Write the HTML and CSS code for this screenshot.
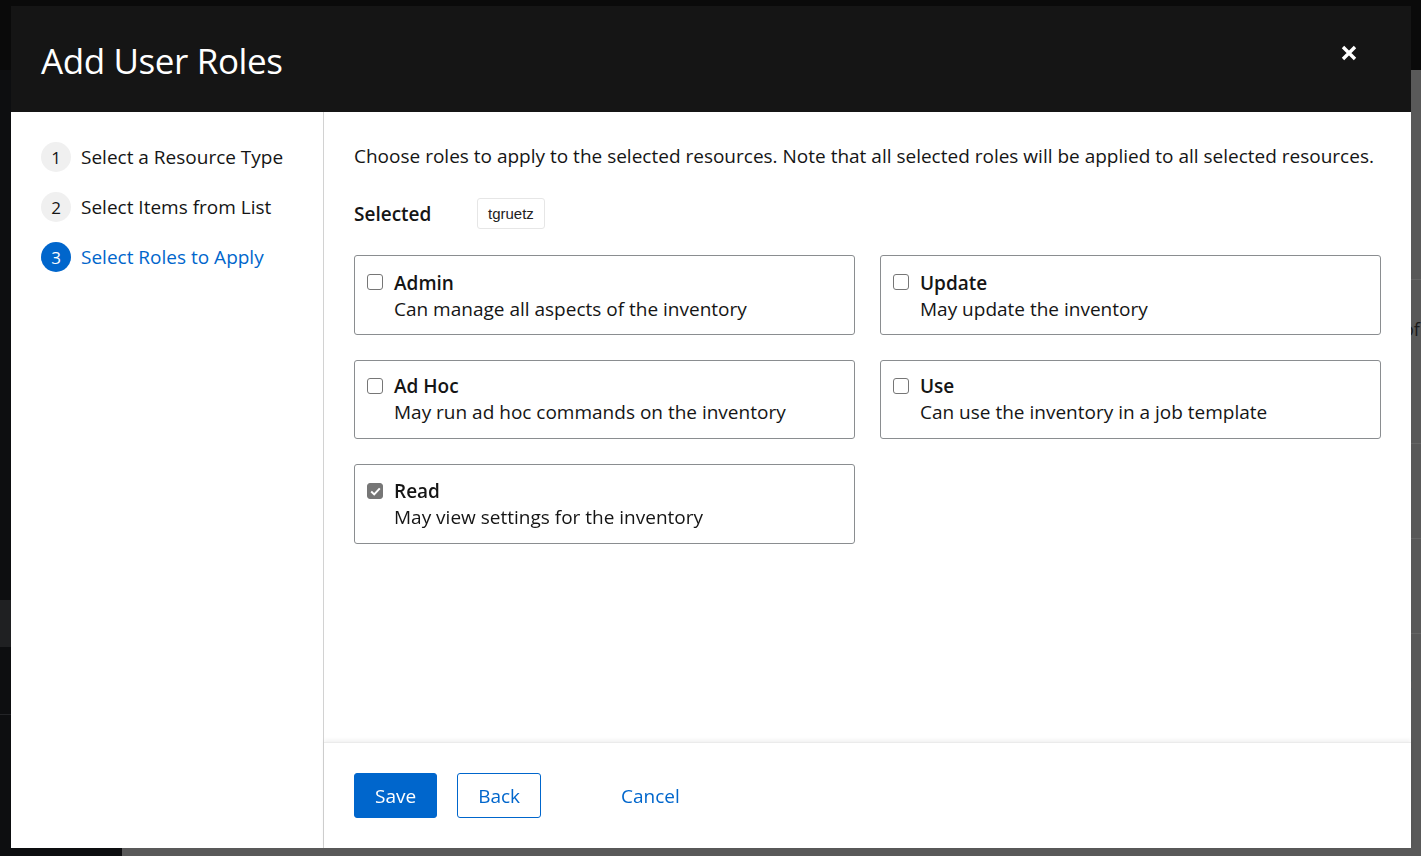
FILE: index.html
```html
<!DOCTYPE html>
<html lang="en">
<head>
<meta charset="utf-8">
<title>Add User Roles</title>
<link rel="stylesheet" href="styles.css">
</head>
<body>
<div class="app">
  <div class="masthead"></div>
  <div class="sidebar">
    <div class="side-item active"></div>
    <div class="side-item"></div>
  </div>
  <div class="page">
    <div class="row"><span class="row-text">of</span></div>
    <div class="row short"></div>
    <div class="row short"></div>
    <div class="row"><span class="row-text">c</span></div>
  </div>
</div>

<div class="modal" role="dialog" aria-label="Add User Roles">
  <header class="modal-header">
    <h1 class="modal-title">Add User Roles</h1>
    <button class="close" aria-label="Close">
      <svg width="18" height="18" viewBox="0 0 18 18"><path d="M3 3 L15 15 M15 3 L3 15" stroke="#fff" stroke-width="3.4" stroke-linecap="butt"/></svg>
    </button>
  </header>
  <div class="modal-body">
    <nav class="steps">
      <div class="step"><span class="num">1</span><span class="step-label">Select a Resource Type</span></div>
      <div class="step"><span class="num">2</span><span class="step-label">Select Items from List</span></div>
      <div class="step current"><span class="num">3</span><span class="step-label">Select Roles to Apply</span></div>
    </nav>
    <div class="main">
      <div class="content">
        <p class="intro">Choose roles to apply to the selected resources. Note that all selected roles will be applied to all selected resources.</p>
        <div class="selected">
          <span class="selected-label">Selected</span>
          <span class="chip">tgruetz</span>
        </div>
        <div class="roles">
          <label class="role">
            <span class="check"></span>
            <span class="role-text"><span class="role-name">Admin</span><span class="role-desc">Can manage all aspects of the inventory</span></span>
          </label>
          <label class="role">
            <span class="check"></span>
            <span class="role-text"><span class="role-name">Update</span><span class="role-desc">May update the inventory</span></span>
          </label>
          <label class="role">
            <span class="check"></span>
            <span class="role-text"><span class="role-name">Ad Hoc</span><span class="role-desc">May run ad hoc commands on the inventory</span></span>
          </label>
          <label class="role">
            <span class="check"></span>
            <span class="role-text"><span class="role-name">Use</span><span class="role-desc">Can use the inventory in a job template</span></span>
          </label>
          <label class="role">
            <span class="check checked"><svg width="11" height="9" viewBox="0 0 11 9"><path d="M1.2 4.6 L4.2 7.4 L9.8 1.4" fill="none" stroke="#fff" stroke-width="2"/></svg></span>
            <span class="role-text"><span class="role-name">Read</span><span class="role-desc">May view settings for the inventory</span></span>
          </label>
        </div>
      </div>
      <footer class="footer">
        <button class="btn primary">Save</button>
        <button class="btn secondary">Back</button>
        <button class="btn link">Cancel</button>
      </footer>
    </div>
  </div>
</div>
</body>
</html>
```

FILE: styles.css
```css
* { box-sizing: border-box; }
html, body { margin: 0; padding: 0; }
body {
  width: 1421px;
  height: 856px;
  overflow: hidden;
  font-family: "Open Sans", "Noto Sans", sans-serif;
  color: #151515;
  background: #0c0d0f;
}

/* backdrop app */
.app {
  display: grid;
  grid-template-columns: 122px 1fr;
  grid-template-rows: 70px 786px;
  height: 856px;
  overflow: hidden;
}
.masthead { grid-column: 1 / 3; background: #0a0a0a; }
.sidebar { background: #0d0e10; padding-top: 530px; overflow: hidden; }
.side-item { height: 47px; }
.side-item.active { background: #1f2022; }
.side-item + .side-item { height: 68px; border-bottom: 1px solid #232427; }
.page {
  background: #595959;
  padding-top: 209px;
  overflow: hidden;
  min-width: 0;
}
.row {
  height: 164px;
  border-top: 1px solid #666;
  padding: 37px 0 0 1281px;
  color: #1a1a1a;
  font-size: 18px;
  line-height: 24px;
  white-space: nowrap;
}
.row.short { height: 95px; }
.row-text { display: block; }

/* modal */
.modal {
  position: fixed;
  left: 11px;
  top: 6px;
  width: 1400px;
  height: 842px;
  background: #fff;
  display: flex;
  flex-direction: column;
}
.modal-header {
  position: relative;
  flex: none;
  height: 106px;
  background: #151515;
  padding: 0 30px;
  display: flex;
  align-items: center;
}
.modal-title {
  margin: 2px 0 0;
  color: #fff;
  font-weight: 500;
  font-size: 35px;
  letter-spacing: -0.4px;
}
.close {
  position: absolute;
  right: 53px;
  top: 38px;
  width: 18px;
  height: 18px;
  padding: 0;
  border: 0;
  background: none;
  display: flex;
}

.modal-body {
  flex: 1;
  display: flex;
  min-height: 0;
}
.steps {
  flex: none;
  width: 313px;
  border-right: 1px solid #d2d2d2;
  padding: 30px 0 0 30px;
  display: flex;
  flex-direction: column;
  gap: 20px;
}
.step {
  display: flex;
  align-items: center;
  gap: 10px;
  font-size: 19px;
  height: 30px;
  white-space: nowrap;
}
.num {
  flex: none;
  width: 30px;
  height: 30px;
  border-radius: 50%;
  background: #f0f0f0;
  display: flex;
  align-items: center;
  justify-content: center;
  font-size: 17px;
}
.step.current .num { background: #0066cc; color: #fff; }
.step.current .step-label { color: #0066cc; }

.main {
  flex: 1;
  display: flex;
  flex-direction: column;
  min-width: 0;
}
.content {
  flex: 1;
  padding: 31px 30px 0 30px;
}
.intro {
  margin: 0;
  font-size: 19px;
  line-height: 27px;
  white-space: nowrap;
}
.selected {
  display: flex;
  align-items: center;
  margin-top: 28px;
  height: 31px;
}
.selected-label {
  width: 123px;
  font-weight: 600;
  font-size: 19px;
}
.chip {
  height: 31px;
  padding: 0 10px;
  border: 1px solid #e6e6e6;
  border-radius: 3px;
  display: flex;
  align-items: center;
  font-family: "Liberation Sans", Arial, sans-serif;
  font-size: 15px;
  color: #222;
}
.roles {
  margin-top: 26px;
  display: grid;
  grid-template-columns: 501px 501px;
  column-gap: 25px;
  row-gap: 25px;
}
.role {
  height: 80px;
  border: 1px solid #8a8d90;
  border-radius: 3px;
  padding: 13px 12px 0 12px;
  display: flex;
  align-items: flex-start;
  gap: 11px;
}
.role:nth-child(1), .role:nth-child(2) { padding-top: 14px; }
.role:nth-child(3), .role:nth-child(4) { height: 79px; padding-top: 12px; }
.check {
  flex: none;
  margin-top: 5px;
  width: 16px;
  height: 16px;
  border: 1px solid #767676;
  border-radius: 3px;
  background: #fff;
  display: flex;
  align-items: center;
  justify-content: center;
}
.role:nth-child(1) .check, .role:nth-child(2) .check { margin-top: 4px; }
.check.checked { background: #767676; border-color: #767676; }
.role-text { display: flex; flex-direction: column; }
.role-name { font-weight: 600; font-size: 19px; line-height: 26px; }
.role-desc { font-size: 19px; line-height: 26px; }

.footer {
  flex: none;
  height: 106px;
  border-top: 1px solid #ebebeb;
  box-shadow: 0 -2px 4px rgba(0, 0, 0, 0.06);
  padding: 30px 30px 0 30px;
  display: flex;
  align-items: flex-start;
  gap: 20px;
}
.btn {
  height: 45px;
  border-radius: 3px;
  font-family: "Open Sans", "Noto Sans", sans-serif;
  font-size: 19px;
  padding: 0 20px;
  cursor: pointer;
}
.btn.primary { background: #0066cc; color: #fff; border: 1px solid #0066cc; }
.btn.secondary { background: #fff; color: #0066cc; border: 1px solid #0066cc; }
.btn.link { background: none; border: 0; color: #0066cc; margin-left: 40px; padding: 0 20px; }
```
